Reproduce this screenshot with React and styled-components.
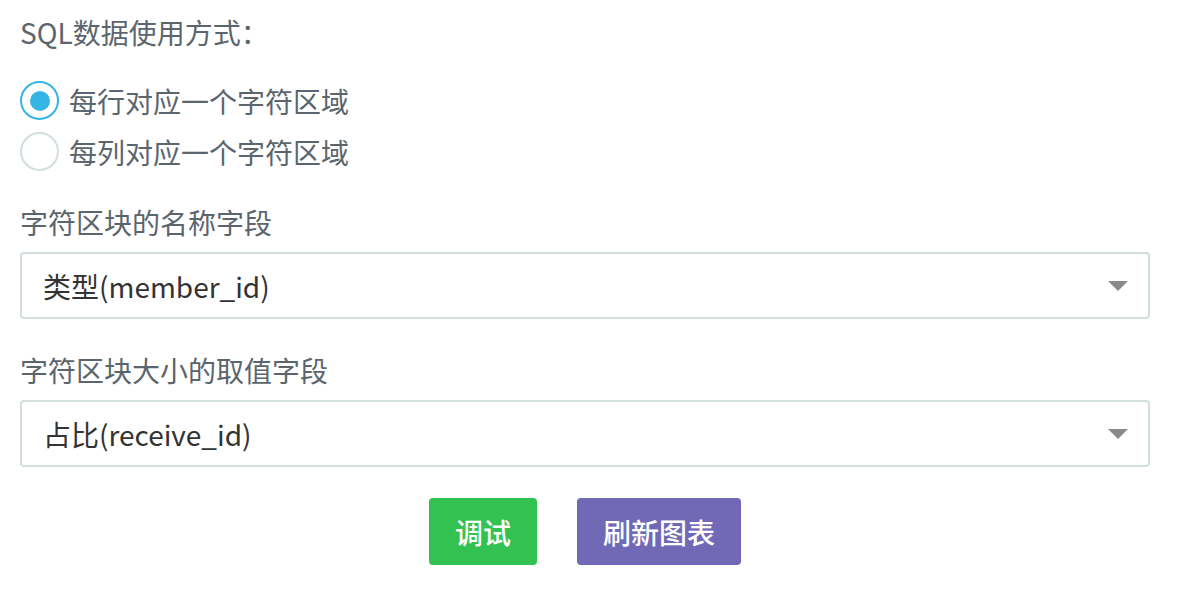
import React, { useState } from "react";
import styled, { createGlobalStyle } from "styled-components";

const GlobalStyle = createGlobalStyle`
  body {
    margin: 0;
    background: #fff;
    font-family: "Noto Sans CJK SC", "Noto Sans", sans-serif;
  }
`;

const Page = styled.div`
  width: 1130px;
  padding: 12px 0 0 20px;
  display: flex;
  flex-direction: column;
`;

const Title = styled.div`
  font-size: 28px;
  line-height: 40px;
  color: #5b656d;
`;

const RadioGroup = styled.div`
  margin-top: 23px;
  display: flex;
  flex-direction: column;
`;

const RadioRow = styled.label`
  height: 51px;
  display: flex;
  align-items: center;
  gap: 10px;
  font-size: 28px;
  color: #5b656d;
  cursor: pointer;
`;

const Circle = styled.span`
  width: 39px;
  height: 39px;
  box-sizing: border-box;
  border-radius: 50%;
  border: 2px solid ${(p) => (p.$checked ? "#35b5e3" : "#d3dedf")};
  display: flex;
  align-items: center;
  justify-content: center;
  &::after {
    content: "";
    width: 20px;
    height: 20px;
    border-radius: 50%;
    background: #35b5e3;
    display: ${(p) => (p.$checked ? "block" : "none")};
  }
`;

const FieldLabel = styled.div`
  margin-top: ${(p) => p.$top}px;
  font-size: 28px;
  line-height: 40px;
  color: #5b656d;
`;

const Select = styled.div`
  margin-top: 10px;
  height: 67px;
  box-sizing: border-box;
  border: 2px solid #d3dedf;
  border-radius: 4px;
  display: flex;
  align-items: center;
  justify-content: space-between;
  padding: 0 20px 0 21px;
  font-size: 28px;
  color: #333;
`;

const Arrow = styled.span`
  width: 0;
  height: 0;
  border-left: 10px solid transparent;
  border-right: 10px solid transparent;
  border-top: 10px solid #8a8a8a;
`;

const Actions = styled.div`
  margin-top: 31px;
  display: flex;
  justify-content: center;
  gap: 40px;
`;

const Button = styled.button`
  height: 67px;
  padding: 0 26px;
  border: none;
  border-radius: 4px;
  background: ${(p) => p.$bg};
  color: #fff;
  font-family: inherit;
  font-size: 28px;
  font-weight: 500;
  cursor: pointer;
`;

export default function App() {
  const [mode, setMode] = useState("row");
  return (
    <>
      <GlobalStyle />
      <Page>
        <Title>SQL数据使用方式：</Title>
        <RadioGroup>
          <RadioRow onClick={() => setMode("row")}>
            <Circle $checked={mode === "row"} />
            每行对应一个字符区域
          </RadioRow>
          <RadioRow onClick={() => setMode("col")}>
            <Circle $checked={mode === "col"} />
            每列对应一个字符区域
          </RadioRow>
        </RadioGroup>
        <FieldLabel $top={25}>字符区块的名称字段</FieldLabel>
        <Select>
          类型(member_id)
          <Arrow />
        </Select>
        <FieldLabel $top={31}>字符区块大小的取值字段</FieldLabel>
        <Select>
          占比(receive_id)
          <Arrow />
        </Select>
        <Actions>
          <Button $bg="#33c252">调试</Button>
          <Button $bg="#7169b6">刷新图表</Button>
        </Actions>
      </Page>
    </>
  );
}
